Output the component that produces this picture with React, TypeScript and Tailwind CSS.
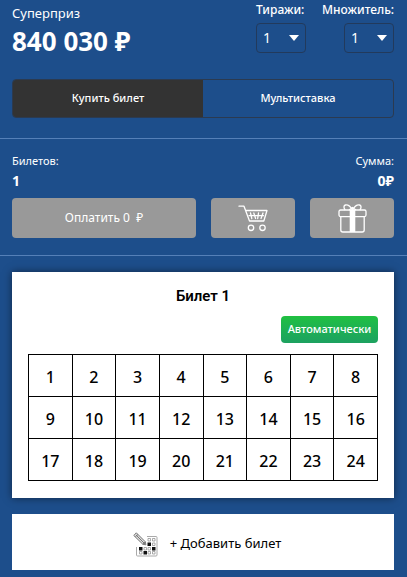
import React, { useState } from "react";

const NUMBERS = Array.from({ length: 24 }, (_, i) => i + 1);
const ROWS = [NUMBERS.slice(0, 8), NUMBERS.slice(8, 16), NUMBERS.slice(16, 24)];

interface CounterSelectProps {
  id: string;
  label: string;
  value: number;
  onChange: (value: number) => void;
}

const CounterSelect: React.FC<CounterSelectProps> = ({ id, label, value, onChange }) => (
  <div className="flex flex-col">
    <label htmlFor={id} className="text-xs leading-5 font-medium whitespace-nowrap">
      {label}
    </label>
    <div className="relative mt-[3px] w-[50px] self-end">
      <select
        id={id}
        value={value}
        onChange={(e) => onChange(Number(e.target.value))}
        className="block h-[30px] w-full appearance-none rounded border border-[#223a5c] bg-transparent pl-[6px] text-sm text-white"
      >
        {[1, 2, 3, 4, 5].map((n) => (
          <option key={n} value={n} className="text-black">
            {n}
          </option>
        ))}
      </select>
      <svg
        className="pointer-events-none absolute top-3 right-[7px] h-[6px] w-[10px]"
        viewBox="0 0 10 6"
        fill="currentColor"
      >
        <path d="M0 0h10L5 6z" />
      </svg>
    </div>
  </div>
);

const CartIcon = () => (
  <svg width="30" height="27" viewBox="0 0 30 27" fill="none" stroke="white" strokeWidth="1.3" strokeLinecap="round" strokeLinejoin="round">
    <path d="M1 1.2h5L11.5 16h14.3L29 5.5H7.6" />
    <path d="M12.5 8l1.3 5.5M15.8 8l1.8 5.5M20.5 8l-.8 5.5M25 8l-2 5.5M11 10.7h14.5" />
    <circle cx="13" cy="22.8" r="2.7" />
    <circle cx="24.5" cy="22.8" r="2.7" />
  </svg>
);

const GiftIcon = () => (
  <svg width="29" height="29" viewBox="0 0 29 29" fill="none" stroke="white" strokeWidth="1.3" strokeLinejoin="round">
    <rect x="1" y="6" width="27" height="6.6" rx="1.5" />
    <path d="M2.8 12.6V26c0 1.2.8 2 2 2h19.4c1.2 0 2-.8 2-2V12.6" />
    <path d="M14.5 6C12.5 2.5 9.5.7 7.5 1 5.5 1.3 5.5 4 7.2 6M14.5 6c2-3.5 5-5.3 7-5 2 .3 2 3 .3 5M11 6l3.5-2.5L18 6" />
    <path d="M11.7 6h5.6v22h-5.6z" fill="white" stroke="none" />
  </svg>
);

const TicketIcon = () => (
  <svg width="25" height="25" viewBox="0 0 25 25" fill="none" stroke="#777" strokeWidth="1">
    <path d="M14 4.5h9q1 0 1 1V23q0 1-1 1H4.5q-1 0-1-1v-8" stroke="#aaa" />
    <path d="M.8 3.5L3.3.8l9 9 .6 3-3-.5z" fill="#ddd" />
    <path d="M2.5 4.5L5 2.5M3 3l9 9M9.8 12.3l2.5-2.5" />
    <path d="M15 6.5h2.5V9H15zM19.5 6.5H22V9h-2.5zM19.5 11H22v2.5h-2.5zM11 15.5h2.5V18H11zM6.5 19.5H9V22H6.5zM15 19.5h2.5V22H15zM19.5 19.5H22V22h-2.5zM15 15.5h2.5V18H15z" stroke="#888" strokeWidth=".7" />
    <path d="M14.5 10.5h3.5V14h-3.5zM6 15h3.5v3.5H6zM19 15h3.5v3.5H19zM10.5 19H14v3.5h-3.5z" fill="#111" stroke="none" />
  </svg>
);

export default function App() {
  const [draws, setDraws] = useState(1);
  const [multiplier, setMultiplier] = useState(1);
  const [tab, setTab] = useState<"ticket" | "multi">("ticket");
  const [picked, setPicked] = useState<number[]>([]);

  const toggle = (n: number) =>
    setPicked((prev) => (prev.includes(n) ? prev.filter((p) => p !== n) : [...prev, n]));

  const pickRandom = () =>
    setPicked([...NUMBERS].sort(() => Math.random() - 0.5).slice(0, 12));

  return (
    <main className="min-h-screen bg-[#1d4e8b] pb-2 font-['Noto_Sans','Open_Sans',sans-serif] text-white">
      <header className="flex justify-between pr-[13px] pl-3">
        <div>
          <p className="mt-[3px] text-[13px] leading-5">Суперприз</p>
          <p className="text-[26px] leading-9 font-bold">840 030 ₽</p>
        </div>
        <div className="flex gap-4">
          <CounterSelect id="draws" label="Тиражи:" value={draws} onChange={setDraws} />
          <CounterSelect id="multiplier" label="Множитель:" value={multiplier} onChange={setMultiplier} />
        </div>
      </header>

      <div className="mt-5 mr-[13px] ml-3 grid h-[39px] grid-cols-2 overflow-hidden rounded border border-[#2b3a50] text-[11px] font-medium">
        <button onClick={() => setTab("ticket")} className={tab === "ticket" ? "bg-[#333]" : ""}>
          Купить билет
        </button>
        <button onClick={() => setTab("multi")} className={tab === "multi" ? "bg-[#333]" : ""}>
          Мультиставка
        </button>
      </div>

      <section className="mt-5 border-y border-[#5580b8] pt-3 pr-[13px] pb-[17px] pl-3">
        <div className="flex justify-between text-[11px] leading-5">
          <span>Билетов:</span>
          <span>Сумма:</span>
        </div>
        <div className="flex justify-between text-sm leading-5 font-bold">
          <span>1</span>
          <span>0₽</span>
        </div>
        <div className="mt-[7px] flex h-10 gap-[15px]">
          <button className="flex-1 rounded bg-[#999] text-xs">Оплатить 0&nbsp; ₽</button>
          <button aria-label="Корзина" className="flex w-[84px] items-center justify-center rounded bg-[#999]">
            <CartIcon />
          </button>
          <button aria-label="Подарок" className="flex w-[84px] items-center justify-center rounded bg-[#999]">
            <GiftIcon />
          </button>
        </div>
      </section>

      <section className="mt-4 mr-[13px] ml-3 bg-white px-4 pt-3 pb-[17px] text-black shadow-[0_0_8px_rgba(0,0,0,0.5)]">
        <h2 className="text-center font-[Roboto,sans-serif] text-[15px] leading-6 font-semibold">Билет 1</h2>
        <div className="mt-2 flex justify-end">
          <button
            onClick={pickRandom}
            className="h-[27px] w-[97px] rounded bg-linear-to-b from-[#20c040] to-[#1da160] text-[11px] font-medium text-white"
          >
            Автоматически
          </button>
        </div>
        <table className="mt-[11px] w-full table-fixed border-collapse">
          <tbody>
            {ROWS.map((row) => (
              <tr key={row[0]}>
                {row.map((n) => (
                  <td key={n} className="h-[42px] border border-black p-0">
                    <button
                      onClick={() => toggle(n)}
                      className={`block h-full w-full pt-0.5 text-base leading-9 font-medium ${picked.includes(n) ? "bg-green-200" : ""}`}
                    >
                      {n}
                    </button>
                  </td>
                ))}
              </tr>
            ))}
          </tbody>
        </table>
      </section>

      <div className="mt-4 mr-[13px] ml-3">
        <button className="flex h-14 w-full items-center justify-center gap-3 bg-white pt-1 pl-2 text-[13px] text-black">
          <TicketIcon />
          + Добавить билет
        </button>
      </div>
    </main>
  );
}
